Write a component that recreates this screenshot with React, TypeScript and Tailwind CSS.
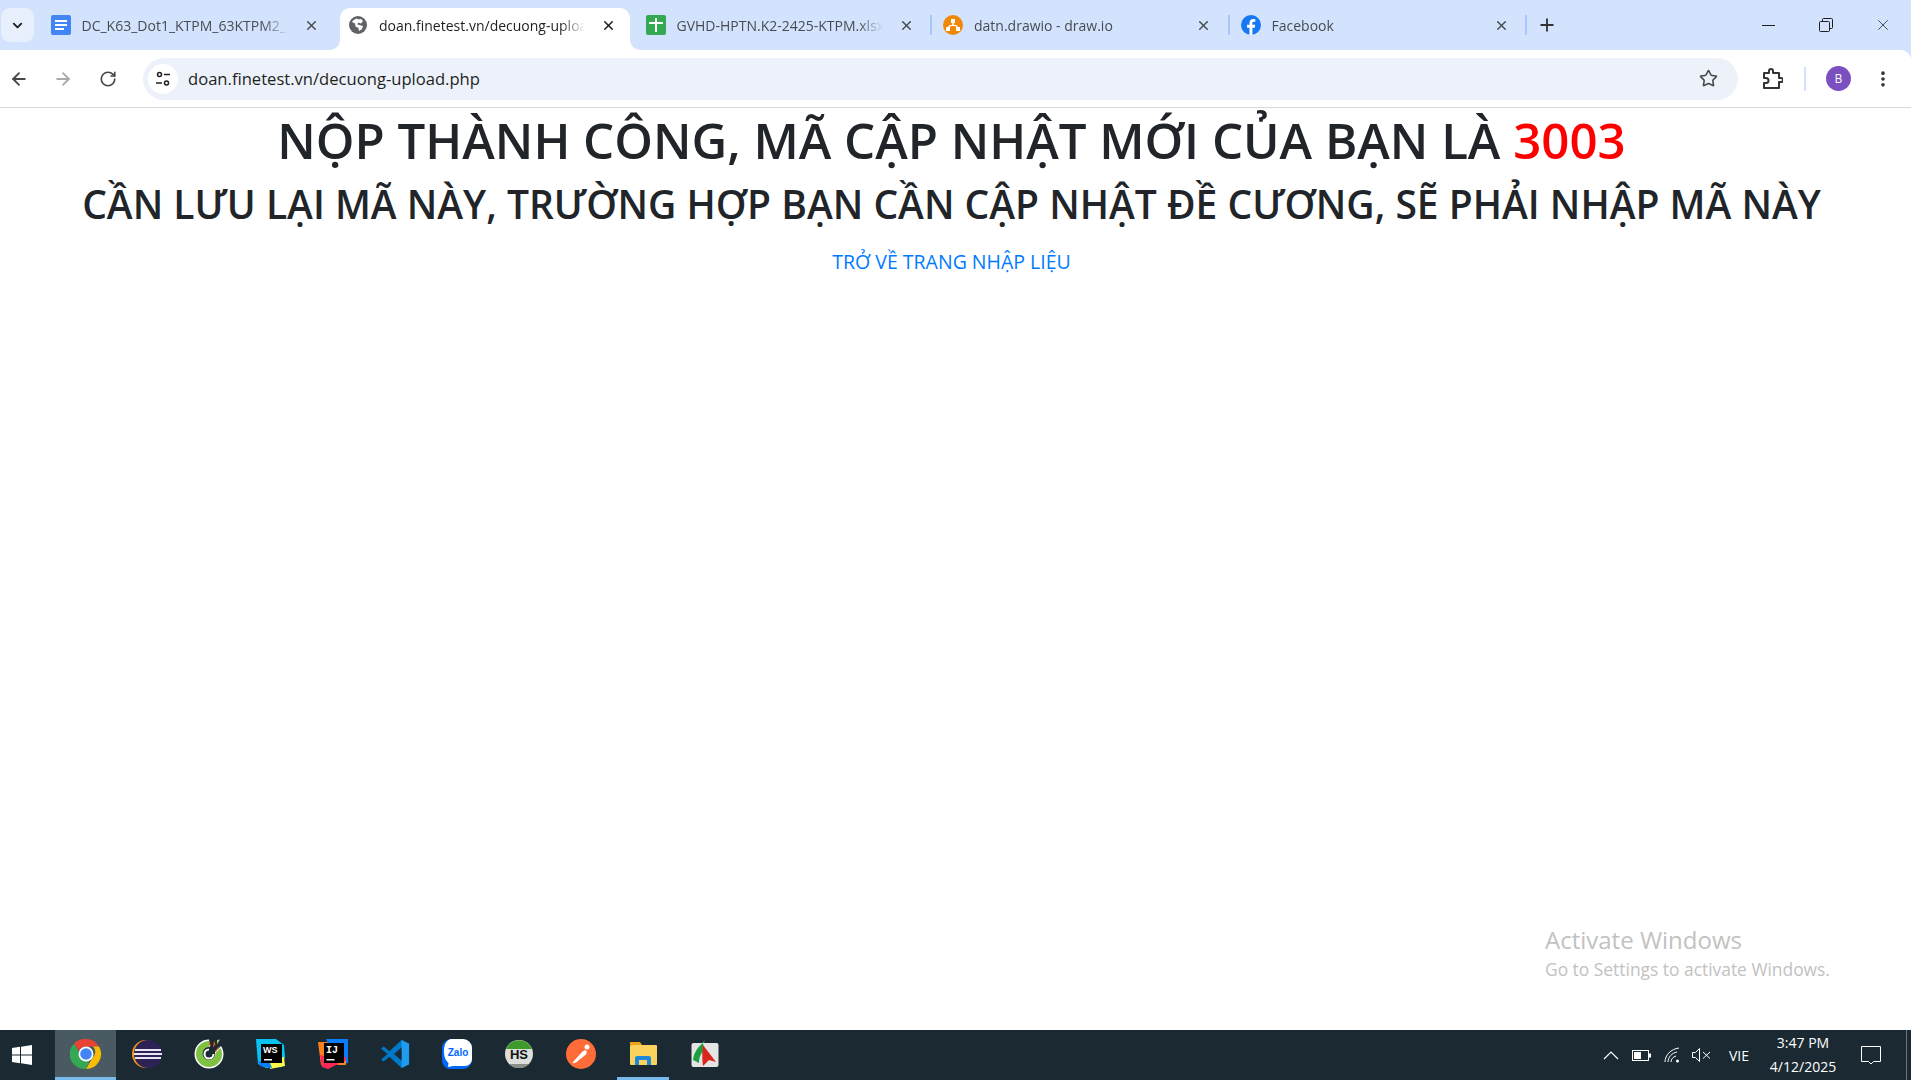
import React from "react";
import { ArrowLeft, ArrowRight, ChevronDown, MoreVertical, Plus, RotateCw, Star, X } from "lucide-react";

const DocsIcon = () => (
  <svg width="20" height="20" viewBox="0 0 20 20">
    <rect width="20" height="20" rx="2" fill="#4285f4" />
    <path d="M4 5h12v2H4zM4 9h12v2H4zM4 13h9v2H4z" fill="#fff" />
  </svg>
);

const GlobeIcon = () => (
  <svg width="18" height="18" viewBox="0 0 18 18">
    <circle cx="9" cy="9" r="9" fill="#5f6368" />
    <path d="M8 2.500c1 1 2 1 4 .5l2 2-2 2.500-3-1-.5 2 3.500 1 2 .5-1 3-3 2-.5-3-3-1.500-.5-3-3-1.500c1-2 3-3 5-3.500z" fill="#fff" />
  </svg>
);

const SheetsIcon = () => (
  <svg width="20" height="20" viewBox="0 0 20 20">
    <rect width="20" height="20" rx="2" fill="#34a853" />
    <path d="M3 7h14v2H3zM9 3h2v14H9z" fill="#fff" />
  </svg>
);

const DrawioIcon = () => (
  <svg width="20" height="20" viewBox="0 0 20 20">
    <circle cx="10" cy="10" r="10" fill="#f08705" />
    <path d="M8 4h4v4h-1.200v2h2.400l1.800 2H17v4h-4v-4h.2l-1-1H7.800l-1 1H7v4H3v-4h1.900l1.800-2h2.500V8H8z" fill="#fff" />
  </svg>
);

const FacebookIcon = () => (
  <svg width="20" height="20" viewBox="0 0 20 20">
    <circle cx="10" cy="10" r="10" fill="#1877f2" />
    <path d="M11.400 20v-7.200h2.400l.4-3h-2.800V8.200c0-.9.3-1.400 1.500-1.400h1.400V4.200c-.4 0-1.200-.2-2.100-.2-2.200 0-3.700 1.300-3.700 3.800v2H6v3h2.500V20z" fill="#fff" />
  </svg>
);

function Tab({
  icon,
  title,
  active,
  separator,
}: {
  icon: React.ReactNode;
  title: string;
  active?: boolean;
  separator?: boolean;
}) {
  return (
    <>
      <div
        className={`relative flex items-center w-[290px] h-[42px] shrink-0 pl-[8px] pr-[14px] pb-[8px] ${active ? "bg-white rounded-t-[10px]" : ""}`}
      >
        {active && (
          <>
            <svg width="10" height="10" viewBox="0 0 10 10" className="absolute bottom-0 -left-[10px]">
              <path d="M10 0v10H0a10 10 0 0 0 10-10z" fill="#fff" />
            </svg>
            <svg width="10" height="10" viewBox="0 0 10 10" className="absolute bottom-0 -right-[10px]">
              <path d="M0 0v10h10A10 10 0 0 1 0 0z" fill="#fff" />
            </svg>
          </>
        )}
        <span className="shrink-0 w-[20px] flex justify-center">{icon}</span>
        <span
          className={`ml-[11px] flex-1 overflow-hidden whitespace-nowrap text-[14px] [mask-image:linear-gradient(to_right,#000_88%,transparent)] ${active ? "text-[#1f1f1f]" : "text-[#474c52]"}`}
        >
          {title}
        </span>
        <X size={15} strokeWidth={2.4} className={`shrink-0 ml-[16px] ${active ? "text-[#1f1f1f]" : "text-[#474c52]"}`} />
      </div>
      <div className="flex items-center justify-center w-[7.5px] h-[42px] shrink-0 pb-[8px]">
        {separator && <span className="w-[2px] h-[20px] bg-[#a8c7fa]" />}
      </div>
    </>
  );
}

const WindowsLogo = () => (
  <svg width="20" height="20" viewBox="0 0 20 20" fill="#fff">
    <path d="M0 3l8-1.200V9.500H0zM9 1.700L20 0v9.500H9zM0 10.500h8v7.700L0 17zM9 10.500h11V20L9 18.300z" />
  </svg>
);

const ChromeIcon = () => (
  <svg width="32" height="32" viewBox="0 0 32 32">
    <path d="M16 1a15 15 0 0 1 13 7.500H16a7.500 7.500 0 0 0-7 4.700L4 5.500A15 15 0 0 1 16 1z" fill="#ea4335" />
    <path d="M29 8.500A15 15 0 0 1 16 31l6.500-11.300a7.500 7.500 0 0 0 .5-11.200z" fill="#fbbc05" />
    <path d="M16 31A15 15 0 0 1 4 5.500l6.500 11.300a7.500 7.500 0 0 0 9 6z" fill="#34a853" />
    <circle cx="16" cy="16" r="7.500" fill="#fff" />
    <circle cx="16" cy="16" r="5.800" fill="#4285f4" />
  </svg>
);

const EclipseIcon = () => (
  <svg width="30" height="30" viewBox="0 0 30 30">
    <circle cx="14" cy="15" r="14" fill="#f7941e" />
    <circle cx="16" cy="15" r="14" fill="#2c2255" />
    <path d="M3 10h26v2H3zM2 14h28v2H2zM3 18h26v2H3z" fill="#e8e4f4" />
  </svg>
);

const CocCocIcon = () => (
  <svg width="30" height="30" viewBox="0 0 30 30">
    <path d="M15 0.500A14.500 14.500 0 1 0 29.500 15c0-3-1-6-2.500-8l-6 6a7 7 0 1 1-5-5z" fill="#fff" />
    <path d="M15 2A13 13 0 1 0 28 15c0-2-.5-4-1.500-6l-5 5a6.500 6.500 0 1 1-6.500-6z" fill="#7fc241" />
    <path d="M15 9.500a5.500 5.500 0 1 0 5.500 5.500h-2a3.500 3.500 0 1 1-3.500-3.500z" fill="#fff" />
    <path d="M15 1l2 6h-1.500zM20 1.500l-1 7 2.500-3zM26 6l-5 6 1 1z" fill="#e8541e" />
    <path d="M23 1l3-.5-3 5z" fill="#a6d472" />
  </svg>
);

const WebStormIcon = () => (
  <svg width="30" height="30" viewBox="0 0 30 30">
    <path d="M0 0h20l8 6 1 12-3 10-16 1-8-4z" fill="#07c3f2" />
    <path d="M14 20l14-2 1 9-15 3z" fill="#fcf84a" />
    <path d="M2 22l12 2 2 5-12-2z" fill="#087cfa" />
    <rect x="5" y="5" width="21" height="19" fill="#000" />
    <text x="7" y="14" fill="#fff" fontSize="9" fontWeight="700" fontFamily="'Liberation Sans', sans-serif">WS</text>
    <rect x="8" y="20" width="8" height="1.500" fill="#fff" />
  </svg>
);

const IdeaIcon = () => (
  <svg width="30" height="30" viewBox="0 0 30 30">
    <path d="M0 3h14v23H3z" fill="#fc801d" />
    <path d="M8 0h22v24l-10 2z" fill="#087cfa" />
    <path d="M2 16l16 4 10-2v8H18l-8 4-6-2z" fill="#fe2857" />
    <path d="M20 22h8v4h-8z" fill="#fc801d" />
    <rect x="6" y="4" width="20" height="20" fill="#000" />
    <text x="8" y="14" fill="#fff" fontSize="10" fontWeight="700" fontFamily="'Liberation Mono', monospace">IJ</text>
    <rect x="8.500" y="20" width="8" height="1.500" fill="#fff" />
  </svg>
);

const VsCodeIcon = () => (
  <svg width="30" height="30" viewBox="0 0 32 32">
    <path d="M23 1l8 4v22l-8 4L10 19l-6 5-3-2 7-6-7-6 3-2 6 5z" fill="#0078c8" />
    <path d="M23 1l8 4v22l-8 4z" fill="#1f9cf0" />
    <path d="M23 9l-8 7 8 7z" fill="#1a2932" />
  </svg>
);

const ZaloIcon = () => (
  <svg width="30" height="30" viewBox="0 0 30 30">
    <path d="M9 0h12a9 9 0 0 1 9 9v12a9 9 0 0 1-9 9H9a8 8 0 0 1-6-2c-1-1-3-3-3-7V9a9 9 0 0 1 9-9z" fill="#0068ff" />
    <path d="M9 0h12a9 9 0 0 1 9 9v11a7 7 0 0 1-7 7H11l-5 1 .5-4C3 21 2 17 2 12 2 6 4 1 9 0z" fill="#fff" />
    <text x="16" y="17" textAnchor="middle" fill="#0068ff" fontSize="10" fontWeight="700" fontFamily="'Liberation Sans', sans-serif">Zalo</text>
  </svg>
);

const HsIcon = () => (
  <svg width="28" height="28" viewBox="0 0 28 28">
    <circle cx="14" cy="14" r="14" fill="#dcdeda" />
    <path d="M1 9a14 14 0 0 1 26 0z" fill="#3f9a2c" />
    <path d="M4 24a14 14 0 0 0 20 0z" fill="#8c8f88" />
    <text x="14" y="19" textAnchor="middle" fill="#111" fontSize="13" fontWeight="700" fontFamily="'Liberation Sans', sans-serif">HS</text>
  </svg>
);

const PostmanIcon = () => (
  <svg width="30" height="30" viewBox="0 0 30 30">
    <circle cx="15" cy="15" r="15" fill="#ff6c37" />
    <circle cx="21" cy="8" r="2.500" fill="#fff" />
    <path d="M7 23l9-10 3-2 2 1.500-1 3-10 8zM7 23l3 .5-3.500 1z" fill="#fff" />
  </svg>
);

const FolderIcon = () => (
  <svg width="28" height="24" viewBox="0 0 28 24">
    <path d="M1 0h10l2 3H1z" fill="#e8a317" />
    <rect x="1" y="3" width="27" height="20" rx="1" fill="#fbd25c" />
    <path d="M6 16a2 2 0 0 1 2-2h12a2 2 0 0 1 2 2v7h-4v-5h-8v5H6z" fill="#1e88d8" />
  </svg>
);

const FoxitIcon = () => (
  <svg width="28" height="28" viewBox="0 0 28 28">
    <rect x="0.500" y="3" width="27" height="24" rx="2" fill="#e4e4e4" />
    <path d="M2 20C3 12 7 7 12 3l1 8c-3 2-5 6-5 12z" fill="#1f9e3d" />
    <path d="M12 5l13 17-7-2-6 6c-1-7-1-14 0-21z" fill="#d9261c" />
    <path d="M11 3l3-3-1 3z" fill="#1f9e3d" />
  </svg>
);

const taskIcons = [
  { key: "chrome", node: <ChromeIcon />, cls: "w-[61px] bg-[#4a5a62] border-[#76b9ed]" },
  { key: "eclipse", node: <EclipseIcon />, cls: "w-[62px] border-transparent" },
  { key: "coccoc", node: <CocCocIcon />, cls: "w-[62px] border-transparent" },
  { key: "webstorm", node: <WebStormIcon />, cls: "w-[62px] border-transparent" },
  { key: "idea", node: <IdeaIcon />, cls: "w-[62px] border-transparent" },
  { key: "vscode", node: <VsCodeIcon />, cls: "w-[62px] border-transparent" },
  { key: "zalo", node: <ZaloIcon />, cls: "w-[62px] border-transparent" },
  { key: "hs", node: <HsIcon />, cls: "w-[62px] border-transparent" },
  { key: "postman", node: <PostmanIcon />, cls: "w-[62px] border-transparent" },
  { key: "folder", node: <FolderIcon />, cls: "w-[52px] mx-[5px] border-[#76b9ed]" },
  { key: "foxit", node: <FoxitIcon />, cls: "w-[62px] border-transparent" },
];

export default function App() {
  return (
    <div className="relative flex flex-col w-[1911px] h-[1080px] overflow-hidden bg-white font-['Open_Sans','Noto_Sans',sans-serif]">
      {/* tab strip */}
      <div className="flex h-[50px] shrink-0 bg-[#d3e3fd]">
        <div className="ml-[1px] mt-[8px] flex items-center justify-center w-[33px] h-[34px] rounded-[9px] bg-[#e8f0fe]">
          <ChevronDown size={15} strokeWidth={3} className="text-[#1f1f1f]" />
        </div>
        <div className="flex items-end ml-[8.500px]">
          <Tab icon={<DocsIcon />} title="DC_K63_Dot1_KTPM_63KTPM2_" />
          <Tab icon={<GlobeIcon />} title="doan.finetest.vn/decuong-upload.php" active />
          <Tab icon={<SheetsIcon />} title="GVHD-HPTN.K2-2425-KTPM.xlsx" separator />
          <Tab icon={<DrawioIcon />} title="datn.drawio - draw.io" separator />
          <Tab icon={<FacebookIcon />} title="Facebook" separator />
          <Plus size={20} strokeWidth={2.2} className="self-center ml-[7px] text-[#333]" />
        </div>
        <div className="flex items-center ml-auto h-full text-[#1f1f1f]">
          <span className="flex justify-center w-[57px]"><span className="block w-[13px] h-[1px] bg-[#1f1f1f]" /></span>
          <span className="flex justify-center w-[57px]">
            <svg width="14" height="14" viewBox="0 0 14 14" fill="none" stroke="#1f1f1f">
              <rect x="0.500" y="3.500" width="10" height="10" rx="1" />
              <path d="M3.500 3V1.500a1 1 0 0 1 1-1h8a1 1 0 0 1 1 1v8a1 1 0 0 1-1 1H11" />
            </svg>
          </span>
          <span className="flex justify-center w-[57px]"><X size={18} strokeWidth={1} /></span>
        </div>
      </div>

      {/* toolbar */}
      <div className="shrink-0 bg-[#d3e3fd]">
        <div className="flex items-center h-[58px] bg-white rounded-tr-[10px] border-b border-[#d9d9d9] pl-[9px]">
          <ArrowLeft size={20} strokeWidth={2.2} className="text-[#474747]" />
          <ArrowRight size={20} strokeWidth={2.2} className="ml-[24px] text-[#aaaaaa]" />
          <RotateCw size={18} strokeWidth={2.2} className="ml-[26px] text-[#474747]" />
          <div className="flex items-center ml-[26px] w-[1595px] h-[42px] rounded-full bg-[#edf2fa] pl-[5px] pr-[20px]">
            <span className="flex items-center justify-center w-[30px] h-[30px] rounded-full bg-white">
              <svg width="16" height="16" viewBox="0 0 16 16" fill="none" stroke="#1f1f1f" strokeWidth="1.500">
                <circle cx="4.500" cy="3.500" r="2" />
                <path d="M9 3.500h6M1 12h6" />
                <circle cx="11.500" cy="12" r="2" />
              </svg>
            </span>
            <span className="ml-[10px] mt-[2px] text-[16.600px] text-[#1f1f1f]">doan.finetest.vn/decuong-upload.php</span>
            <Star size={19} strokeWidth={2} className="ml-auto text-[#474747]" />
          </div>
          <svg width="20" height="22" viewBox="0 0 20 22" fill="none" stroke="#333" strokeWidth="2" className="ml-[25px]">
            <path d="M1 5h5V3a2 2 0 0 1 4 0v2h6v5h2a2 2 0 0 1 0 4h-2v6H1v-5h2a2.500 2.500 0 0 0 0-5H1z" strokeLinejoin="round" />
          </svg>
          <span className="ml-[21px] w-[2px] h-[24px] bg-[#d3e3fd]" />
          <span className="flex items-center justify-center ml-[20px] w-[25px] h-[25px] rounded-full bg-[#7b4fc0] text-white text-[12px]">B</span>
          <MoreVertical size={20} strokeWidth={2.4} className="ml-[22px] text-[#333]" />
        </div>
      </div>

      {/* page */}
      <main className="flex-1 flex flex-col items-center pr-[8px] text-[#212529]">
        <h1 className="mt-[3px] text-[49.200px] leading-[58px] font-semibold whitespace-nowrap">
          NỘP THÀNH CÔNG, MÃ CẬP NHẬT MỚI CỦA BẠN LÀ <span className="text-[#ff0000]">3003</span>
        </h1>
        <h2 className="mt-[11px] text-[39px] leading-[48px] font-semibold whitespace-nowrap">
          CẦN LƯU LẠI MÃ NÀY, TRƯỜNG HỢP BẠN CẦN CẬP NHẬT ĐỀ CƯƠNG, SẼ PHẢI NHẬP MÃ NÀY
        </h2>
        <a className="mt-[20px] text-[19.500px] leading-[28px] text-[#007bff]">TRỞ VỀ TRANG NHẬP LIỆU</a>
      </main>

      {/* activation watermark */}
      <div className="absolute left-[1545px] top-[924px] text-[#c2c2c2]">
        <div className="text-[24px] leading-[32px]">Activate Windows</div>
        <div className="text-[17.400px] leading-[26px]">Go to Settings to activate Windows.</div>
      </div>

      {/* taskbar */}
      <div className="flex items-stretch h-[50px] shrink-0 bg-[#1a2932] text-white">
        <div className="flex items-center justify-center w-[42px] ml-[1px]"><WindowsLogo /></div>
        <div className="flex ml-[12px]">
          {taskIcons.map((t) => (
            <div key={t.key} className={`flex items-center justify-center border-b-[3px] ${t.cls}`}>
              {t.node}
            </div>
          ))}
        </div>
        <div className="flex items-center ml-auto">
          <svg width="16" height="9" viewBox="0 0 16 9" fill="none" stroke="#fff" strokeWidth="1.200"><path d="M1 8l7-7 7 7" /></svg>
          <svg width="19" height="11" viewBox="0 0 19 11" fill="none" className="ml-[13px]">
            <rect x="0.500" y="0.500" width="16" height="10" stroke="#fff" />
            <rect x="2" y="2" width="7" height="7" fill="#fff" />
            <rect x="17" y="3.500" width="2" height="4" fill="#fff" />
          </svg>
          <svg width="17" height="16" viewBox="0 0 17 16" fill="none" stroke="#fff" className="ml-[13px]">
            <path d="M1 15C1 8 7 2 15 1M4 15c0-5 4-9 9-10M7 15c0-3 2-5 5-6" />
            <circle cx="13.500" cy="14" r="1.500" fill="#fff" stroke="none" />
          </svg>
          <svg width="19" height="14" viewBox="0 0 19 14" fill="none" stroke="#fff" className="ml-[11px]">
            <path d="M0.500 4.500h3l4-4v13l-4-4h-3zM11 4l7 6.500M18 4l-7 6.500" />
          </svg>
          <span className="ml-[18px] text-[14px]">VIE</span>
          <div className="flex flex-col items-center ml-[20px] w-[68px] text-[14px] leading-[24px]">
            <span className="whitespace-nowrap">3:47 PM</span>
            <span className="whitespace-nowrap">4/12/2025</span>
          </div>
          <svg width="20" height="19" viewBox="0 0 20 19" fill="none" stroke="#fff" className="ml-[24px]">
            <path d="M0.500 0.500h19v15h-7l-2.500 2.500-2.500-2.500h-7z" />
          </svg>
          <span className="ml-[25px] mr-[4px] w-[1px] h-full bg-[#6b7780]" />
        </div>
      </div>
    </div>
  );
}
